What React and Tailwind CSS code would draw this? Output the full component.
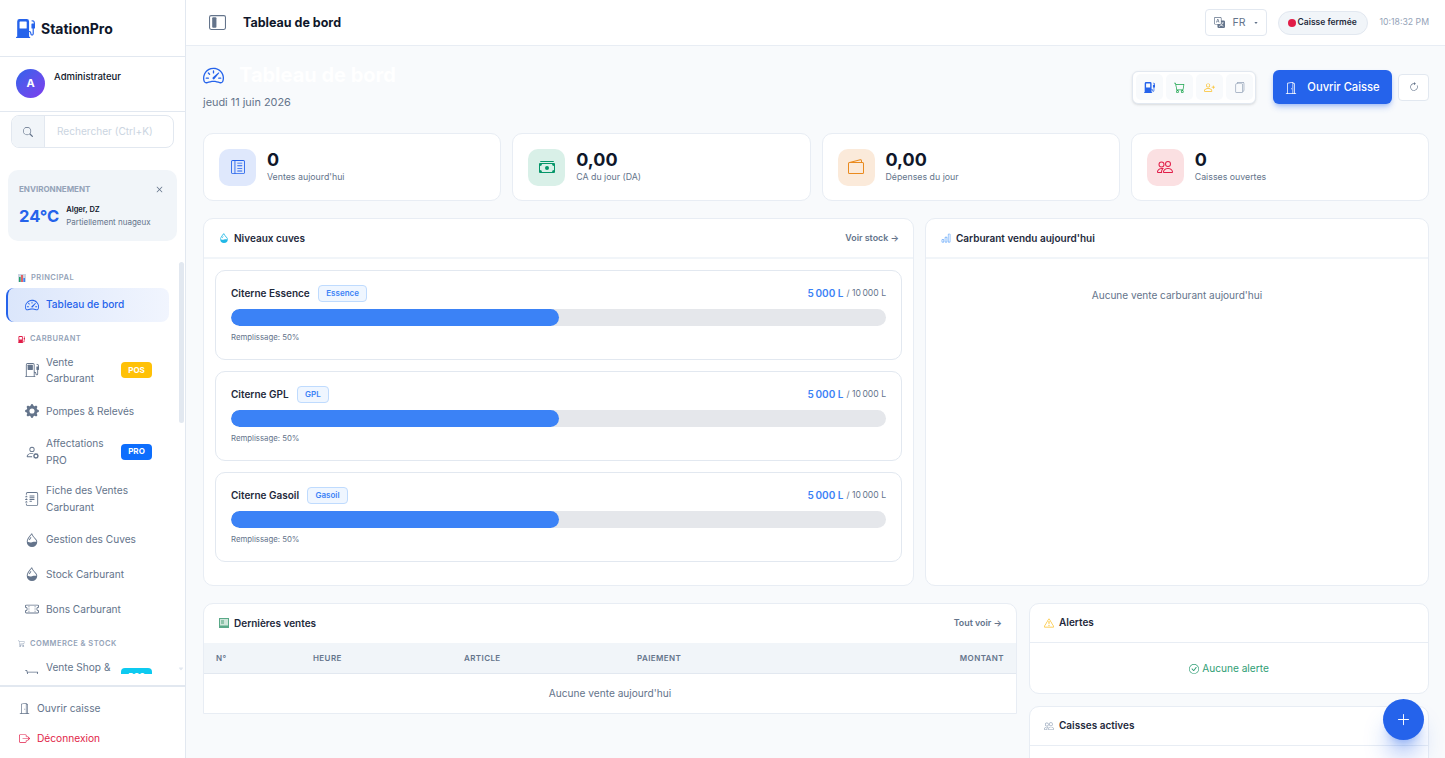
import React from "react";
import {
  BsFuelPumpFill, BsFuelPump, BsSpeedometer2, BsGearFill, BsPersonGear, BsJournalText, BsDropletHalf, BsTicketPerforated,
  BsCart3, BsDoorOpen, BsBoxArrowRight, BsSearch, BsX, BsLayoutSidebarInset, BsTranslate, BsCart, BsPersonPlus,
  BsFiles, BsArrowClockwise, BsExclamationTriangle, BsCheckCircle, BsPlusLg, BsBarChart, BsPeople, BsCashStack,
  BsWallet2, BsLayoutTextSidebarReverse, BsCaretDownFill,
} from "react-icons/bs";

function ChartGlyph() {
  return (
    <svg width="8" height="8" viewBox="0 0 8 8">
      <rect width="8" height="8" fill="#cbd5e1" />
      <rect x="1" y="3" width="1.6" height="5" fill="#22a06b" />
      <rect x="3.2" y="1" width="1.6" height="7" fill="#e5484d" />
      <rect x="5.4" y="4" width="1.6" height="4" fill="#3b82f6" />
    </svg>
  );
}

function LedgerGlyph() {
  return (
    <svg width="10" height="10" viewBox="0 0 10 10">
      <rect x="0.5" y="0.5" width="9" height="9" fill="#cfe6da" stroke="#5aa988" />
      <rect x="2" y="2" width="3" height="4" fill="#8fc4ab" />
      <rect x="0.5" y="7.5" width="9" height="2" fill="#5aa988" />
    </svg>
  );
}

function Section({ icon, children, className = "" }) {
  return (
    <div className={`flex items-center gap-[5px] pl-[18px] h-[17px] text-[7.5px] font-semibold tracking-[0.45px] text-[#94a3b8] ${className}`}>
      {icon}
      <span>{children}</span>
    </div>
  );
}

function Item({ Icon, label, badge, badgeClass = "", h = "h-[34.7px]", iconSize = 14 }) {
  return (
    <div className={`flex items-center mx-[6px] w-[163px] pl-[19px] ${h} text-[10.15px] leading-[16.5px] text-[#64748b]`}>
      <span className="w-[21px] shrink-0 flex"><Icon size={iconSize} /></span>
      <span className={badge ? "w-[75px]" : ""}>{label}</span>
      {badge && (
        <span className={`px-[6px] h-[16px] w-[31px] flex items-center justify-center rounded-[4px] text-[8px] font-bold text-white ${badgeClass}`}>{badge}</span>
      )}
    </div>
  );
}

function Sidebar() {
  return (
    <aside className="w-[186px] shrink-0 h-full bg-white border-r border-[#e2e8f0] flex flex-col">
      <div className="h-[57px] shrink-0 border-b border-[#e2e8f0] flex items-center pl-[16px] gap-[6px]">
        <BsFuelPumpFill size={19} className="text-[#2563eb]" />
        <span className="text-[14px] font-bold text-[#0f172a]">StationPro</span>
      </div>
      <div className="h-[55px] shrink-0 border-b border-[#e2e8f0] flex items-start pl-[16px] pt-[12px] gap-[9px]">
        <div className="w-[29px] h-[29px] rounded-full bg-gradient-to-br from-[#2563eb] to-[#7c3aed] flex items-center justify-center text-white text-[11px] font-bold">A</div>
        <span className="text-[9.5px] font-medium text-[#0f172a] mt-[1px]">Administrateur</span>
      </div>
      <div className="mx-[11px] mt-[3px] h-[33px] shrink-0 w-[163px] border border-[#e2e8f0] rounded-[8px] flex overflow-hidden">
        <div className="w-[33px] bg-[#f1f5f9] border-r border-[#e2e8f0] flex items-center justify-center text-[#64748b]"><BsSearch size={10} /></div>
        <div className="flex-1 flex items-center pl-[12px] text-[10.1px] text-[#cbd5e1]">Rechercher (Ctrl+K)</div>
      </div>
      <div className="relative mx-[8px] mt-[22px] h-[71px] shrink-0 bg-[#f1f5f9] rounded-[10px] px-[11px] pt-[13px]">
        <div className="text-[8px] font-bold text-[#94a3b8]">ENVIRONNEMENT</div>
        <BsX size={13} className="absolute top-[13px] right-[11px] text-[#64748b]" />
        <div className="flex items-center mt-[9px] gap-[7px]">
          <span className="text-[16.5px] font-bold text-[#2563eb]">24°C</span>
          <div className="flex flex-col">
            <span className="text-[7.5px] font-semibold text-[#0f172a] leading-[12px]">Alger, DZ</span>
            <span className="text-[8px] text-[#64748b] leading-[12px]">Partiellement nuageux</span>
          </div>
        </div>
      </div>
      <div className="relative mt-[21px] h-[423px] shrink-0 overflow-hidden">
        <div className="h-[412px] overflow-hidden pt-[7.5px]">
          <Section icon={<ChartGlyph />}>PRINCIPAL</Section>
          <div className="mx-[6px] w-[163px] h-[34px] mt-[1.5px] rounded-[8px] border-l-2 border-[#2563eb] bg-gradient-to-r from-[#dbe6fb] to-[#f1f5fe] flex items-center pl-[17px] text-[10.15px] font-medium text-[#2563eb]">
            <span className="w-[21px] flex"><BsSpeedometer2 size={14} /></span>Tableau de bord
          </div>
          <Section className="mt-[8.5px] -mb-[1px]" icon={<BsFuelPumpFill size={7} className="text-[#e11d48]" />}>CARBURANT</Section>
          <Item Icon={BsFuelPump} label="Vente Carburant" badge="POS" badgeClass="bg-[#ffc107]" h="h-[47px]" />
          <Item Icon={BsGearFill} label="Pompes & Relevés" />
          <Item Icon={BsPersonGear} label="Affectations PRO" badge="PRO" badgeClass="bg-[#0d6efd]" h="h-[47px]" />
          <Item Icon={BsJournalText} label="Fiche des Ventes Carburant" h="h-[47px]" />
          <Item Icon={BsDropletHalf} label="Gestion des Cuves" />
          <Item Icon={BsDropletHalf} label="Stock Carburant" />
          <Item Icon={BsTicketPerforated} label="Bons Carburant" />
          <Section className="mt-[9px]" icon={<BsCart3 size={7} />}>COMMERCE & STOCK</Section>
          <Item Icon={BsCart3} label="Vente Shop & Caisse" badge="POS" badgeClass="bg-[#0dcaf0]" h="h-[47px]" />
        </div>
        <div className="absolute right-[1px] top-0 w-[5px] h-[161px] rounded-full bg-[#e2e8f0]" />
        <BsCaretDownFill size={6} className="absolute right-[1px] top-[404px] text-[#e2e8f0]" />
      </div>
      <div className="mt-auto h-[73px] shrink-0 border-t-2 border-[#e2e8f0] flex flex-col pl-[19px] text-[10.2px] pt-[13px] gap-[13px]">
        <div className="flex items-center gap-[7px] h-[17px] text-[#64748b]"><BsDoorOpen size={11} />Ouvrir caisse</div>
        <div className="flex items-center gap-[7px] h-[17px] text-[#e11d48]"><BsBoxArrowRight size={11} />Déconnexion</div>
      </div>
    </aside>
  );
}

function Topbar() {
  return (
    <header className="h-[46px] shrink-0 bg-white border-b border-[#e8edf4] flex items-center pl-[23px] pr-[16px]">
      <BsLayoutSidebarInset size={17} className="text-[#64748b]" />
      <span className="ml-[17px] pt-[1px] text-[12.5px] font-bold text-[#0f172a]">Tableau de bord</span>
      <div className="ml-auto flex items-center">
        <div className="w-[62px] h-[27px] border border-[#e2e8f0] rounded-[4px] flex items-center pl-[8px] text-[#64748b]">
          <BsTranslate size={11} />
          <span className="ml-[8px] text-[10.5px]">FR</span>
          <BsCaretDownFill size={4} className="ml-[8px]" />
        </div>
        <div className="ml-[11px] w-[90px] h-[24px] rounded-full bg-[#f1f5f9] border border-[#e2e8f0] flex items-center pl-[9px] gap-[2px]">
          <span className="w-[8px] h-[8px] rounded-full bg-[#e11d48]" />
          <span className="text-[8.5px] font-semibold text-[#1e293b]">Caisse fermée</span>
        </div>
        <span className="ml-[12px] text-[8.7px] text-[#94a3b8]">10:18:32 PM</span>
      </div>
    </header>
  );
}

function Stat({ Icon, size = 16, bg, color, value, label }) {
  return (
    <div className="bg-white border border-[#e8edf4] rounded-[10px] h-[68px] flex items-center pl-[15px]">
      <div className={`w-[37px] h-[37px] rounded-[10px] flex items-center justify-center ${bg} ${color}`}><Icon size={size} /></div>
      <div className="ml-[11px] flex flex-col pb-[2px]">
        <span className="text-[18px] leading-[20px] font-bold text-[#0f172a]">{value}</span>
        <span className="text-[8.8px] leading-[13px] text-[#64748b]">{label}</span>
      </div>
    </div>
  );
}

function Tank({ name, tag }) {
  return (
    <div className="border border-[#e2e8f0] rounded-[10px] h-[90px] px-[15px] pt-[12px]">
      <div className="flex items-center h-[20px]">
        <span className="text-[10px] font-semibold text-[#1e293b]">{name}</span>
        <span className="ml-[8px] h-[17px] px-[7.5px] flex items-center rounded-[4px] border border-[#bfdbfe] bg-[#eff6ff] text-[8px] font-semibold text-[#3b82f6]">{tag}</span>
        <span className="ml-auto pt-[1px] text-[10px] font-semibold text-[#3b82f6]">5{"\u202f"}000 L</span>
        <span className="ml-[3px] pt-[1px] text-[8.6px] text-[#64748b]">/ 10{"\u202f"}000 L</span>
      </div>
      <div className="mt-[6px] h-[17px] rounded-full bg-[#e5e7eb] overflow-hidden">
        <div className="h-full w-1/2 rounded-full bg-[#3b82f6]" />
      </div>
      <div className="mt-[6px] text-[7.8px] text-[#64748b]">Remplissage: 50%</div>
    </div>
  );
}

function CardHead({ icon, title, link, h = "h-[40px]", line = "border-b border-[#e8edf4]", pl = "pl-[15px]" }) {
  return (
    <div className={`${h} ${line} flex items-center ${pl} pr-[14px]`}>
      <span className="w-[15px] flex">{icon}</span>
      <span className="text-[10px] font-semibold text-[#1e293b]">{title}</span>
      {link && <span className="ml-auto text-[8.9px] font-semibold text-[#64748b]">{link}</span>}
    </div>
  );
}

function Main() {
  return (
    <main className="flex-1 min-w-0 h-full flex flex-col overflow-hidden relative bg-[#f8fafc]">
      <Topbar />
      <div className="flex-1 overflow-hidden pl-[17px] pr-[16px]">
        <div className="flex items-start h-[87px] pt-[16px]">
          <div>
            <div className="flex items-center h-[26px]">
              <BsSpeedometer2 size={21} className="text-[#2563eb]" />
              <span className="ml-[15px] text-[20px] font-bold text-white">Tableau de bord</span>
            </div>
            <div className="mt-[6px] text-[10.9px] text-[#64748b]">jeudi 11 juin 2026</div>
          </div>
          <div className="ml-auto mt-[8px] flex items-center">
            <div className="w-[124px] h-[33px] bg-white border border-[#e2e8f0] rounded-[6px] shadow-sm flex items-center justify-center gap-[3px]">
              <span className="w-[27px] h-[26px] rounded-[5px] bg-[#f8fafc] flex items-center justify-center text-[#2563eb]"><BsFuelPumpFill size={11} /></span>
              <span className="w-[27px] h-[26px] rounded-[5px] bg-[#f8fafc] flex items-center justify-center text-[#16a34a]"><BsCart size={11} /></span>
              <span className="w-[27px] h-[26px] rounded-[5px] bg-[#f8fafc] flex items-center justify-center text-[#fbbf24]"><BsPersonPlus size={11} /></span>
              <span className="w-[27px] h-[26px] rounded-[5px] bg-[#f8fafc] flex items-center justify-center text-[#94a3b8]"><BsFiles size={11} /></span>
            </div>
            <div className="ml-[17px] w-[119px] h-[34px] rounded-[6px] bg-[#2563eb] shadow-md shadow-[#2563eb]/30 text-white flex items-center justify-center gap-[10px] pt-[1px] text-[11.2px] font-medium">
              <BsDoorOpen size={12} />Ouvrir Caisse
            </div>
            <div className="ml-[6px] w-[31px] h-[27px] bg-white border border-[#e2e8f0] rounded-[4px] flex items-center justify-center text-[#64748b]"><BsArrowClockwise size={10} /></div>
          </div>
        </div>
        <div className="grid grid-cols-4 gap-[11px]">
          <Stat Icon={BsLayoutTextSidebarReverse} size={14} bg="bg-[#dfe8fc]" color="text-[#2563eb]" value="0" label="Ventes aujourd'hui" />
          <Stat Icon={BsCashStack} bg="bg-[#d9f0e8]" color="text-[#059669]" value="0,00" label="CA du jour (DA)" />
          <Stat Icon={BsWallet2} bg="bg-[#fbeada]" color="text-[#ea8a1e]" value="0,00" label="Dépenses du jour" />
          <Stat Icon={BsPeople} bg="bg-[#fbe0e2]" color="text-[#e11d48]" value="0" label="Caisses ouvertes" />
        </div>
        <div className="mt-[17px] grid grid-cols-[711px_1fr] gap-[11px] h-[368px]">
          <div className="bg-white border border-[#e8edf4] rounded-[10px]">
            <CardHead icon={<BsDropletHalf size={10} className="text-[#22b8e6]" />} title="Niveaux cuves" link="Voir stock →" line="border-b-2 border-[#f1f5f9]" />
            <div className="px-[11px] pt-[11px] flex flex-col gap-[11px]">
              <Tank name="Citerne Essence" tag="Essence" />
              <Tank name="Citerne GPL" tag="GPL" />
              <Tank name="Citerne Gasoil" tag="Gasoil" />
            </div>
          </div>
          <div className="bg-white border border-[#e8edf4] rounded-[10px]">
            <CardHead icon={<BsBarChart size={10} className="text-[#60a5fa]" />} title="Carburant vendu aujourd'hui" line="border-b-2 border-[#f1f5f9]" />
            <div className="pt-[29px] text-center text-[10.05px] text-[#64748b]">Aucune vente carburant aujourd'hui</div>
          </div>
        </div>
        <div className="mt-[17px] grid grid-cols-[814px_1fr] gap-[12px] items-start">
          <div className="bg-white border border-[#e8edf4] rounded-t-[10px]">
            <CardHead icon={<LedgerGlyph />} title="Dernières ventes" link="Tout voir →" h="h-[39px] pb-[1px]" line="" />
            <div className="h-[31px] bg-[#f1f5f9] border-b border-[#e2e8f0] grid grid-cols-[97px_151px_173px_1fr_auto] items-center px-[12px] text-[8px] font-semibold tracking-[0.4px] text-[#64748b]">
              <span>N°</span><span>HEURE</span><span>ARTICLE</span><span>PAIEMENT</span><span>MONTANT</span>
            </div>
            <div className="h-[39px] flex items-center justify-center text-[10.15px] text-[#64748b]">Aucune vente aujourd'hui</div>
          </div>
          <div className="flex flex-col gap-[12px]">
            <div className="bg-white border border-[#e8edf4] rounded-[10px] h-[91px]">
              <CardHead icon={<BsExclamationTriangle size={10} className="text-[#fbbf24]" />} title="Alertes" h="h-[39px] pb-[1px]" pl="pl-[14px]" />
              <div className="h-[51px] flex items-center justify-center gap-[3px] text-[10.15px] text-[#2f9e75]"><BsCheckCircle size={10} />Aucune alerte</div>
            </div>
            <div className="bg-white border border-[#e8edf4] rounded-[10px] h-[80px]">
              <CardHead icon={<BsPeople size={10} className="text-[#94a3b8]" />} title="Caisses actives" h="h-[39px] pb-[1px]" pl="pl-[14px]" />
            </div>
          </div>
        </div>
      </div>
      <div className="absolute right-[21px] bottom-[18px] w-[41px] h-[41px] rounded-full bg-[#2563eb] shadow-xl shadow-[#2563eb]/40 flex items-center justify-center text-white"><BsPlusLg size={15} /></div>
    </main>
  );
}

export default function App() {
  return (
    <div className="flex w-[1445px] h-[758px] overflow-hidden bg-[#f8fafc] font-['Inter',sans-serif]">
      <Sidebar />
      <Main />
    </div>
  );
}
